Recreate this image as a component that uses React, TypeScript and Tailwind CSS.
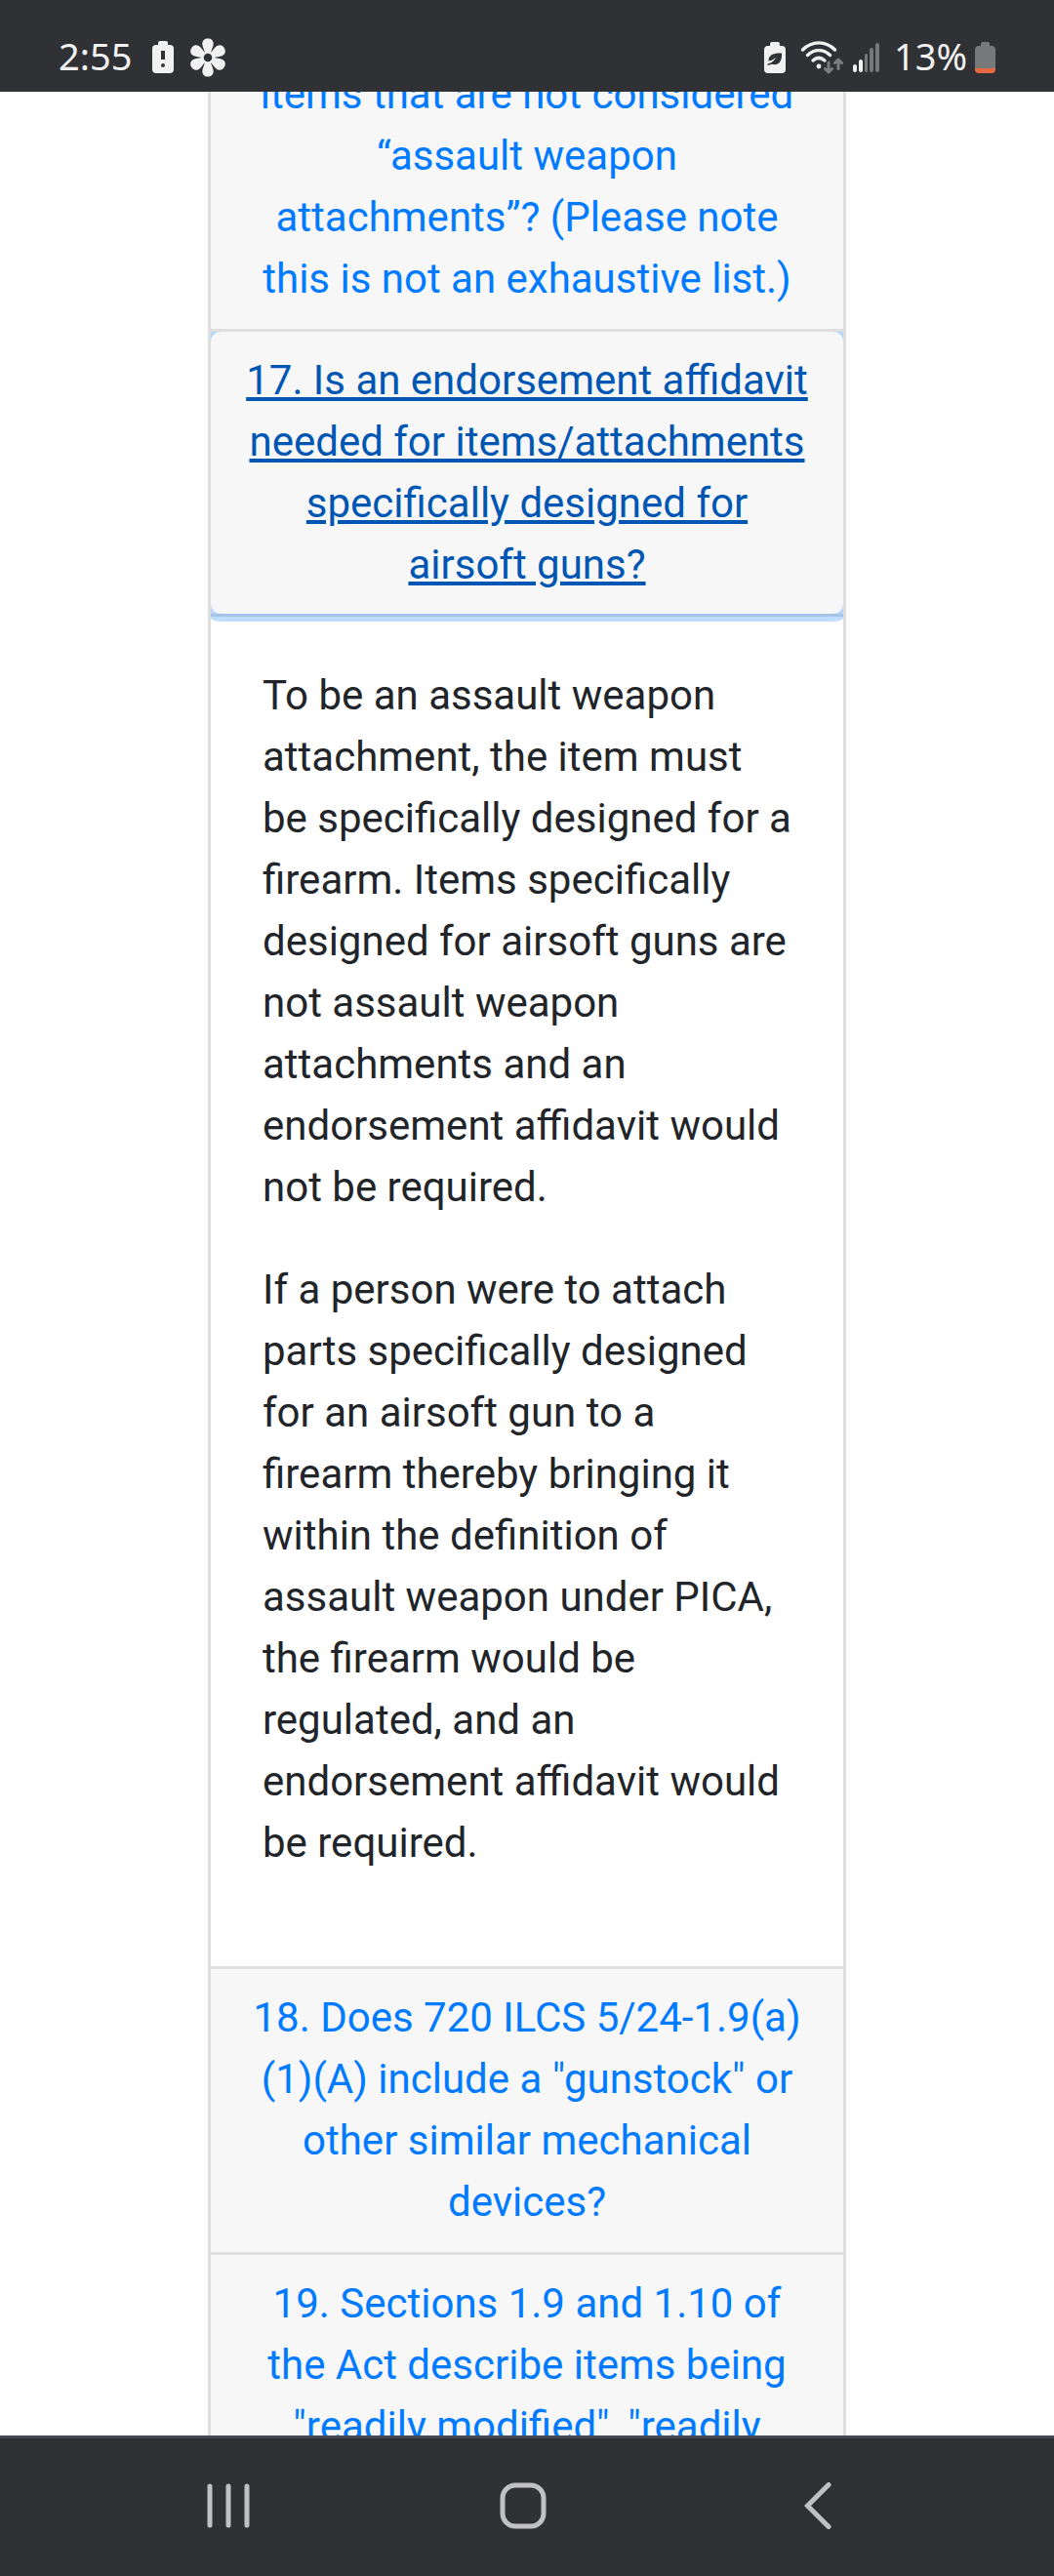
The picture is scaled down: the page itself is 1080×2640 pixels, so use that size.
import type { ReactNode } from "react";

const answer = [
  "To be an assault weapon attachment, the item must be specifically designed for a firearm. Items specifically designed for airsoft guns are not assault weapon attachments and an endorsement affidavit would not be required.",
  "If a person were to attach parts specifically designed for an airsoft gun to a firearm thereby bringing it within the definition of assault weapon under PICA, the firearm would be regulated, and an endorsement affidavit would be required.",
];

const petals = [0, 60, 120, 180, 240, 300];

function BatteryAlertIcon() {
  return (
    <svg width="24" height="34" viewBox="0 0 24 34" aria-hidden="true">
      <path
        d="M7 4V2q0-2 2-2h6q2 0 2 2v2h2q4 0 4 4v21q0 4-4 4H5q-4 0-4-4V8q0-4 4-4z"
        fill="#f1f1f1"
      />
      <path d="M12 10v9" stroke="#303135" strokeWidth="4" />
      <circle cx="12" cy="25" r="2" fill="#303135" />
    </svg>
  );
}

function FlowerIcon() {
  return (
    <svg width="40" height="40" viewBox="0 0 40 40" aria-hidden="true">
      <g fill="#f1f1f1">
        {petals.map((deg) => (
          <path
            key={deg}
            transform={`rotate(${deg} 20 20)`}
            d="M17.5 16.5C16.5 12 14.3 9 14.3 6C14.3 2.5 16.5 .5 20 .5S25.7 2.5 25.7 6C25.7 9 23.5 12 22.5 16.5z"
          />
        ))}
        <circle cx="20" cy="20" r="6" />
      </g>
      <circle cx="20" cy="20" r="4.3" fill="#303135" />
    </svg>
  );
}

function BatteryLeafIcon() {
  return (
    <svg width="22" height="32" viewBox="0 0 22 32" aria-hidden="true">
      <path
        d="M6 4V2q0-2 2-2h6q2 0 2 2v2h2q4 0 4 4v20q0 4-4 4H4q-4 0-4-4V8q0-4 4-4z"
        fill="#f1f1f1"
      />
      <path
        d="M18 11.5C10 11 4.5 13 4.5 19.5C8 19 10 17.5 12 16C10.5 19 8 21.3 3.5 22.5V24L8 22.8C15 24.5 18.5 20 18 11.5z"
        fill="#303135"
      />
    </svg>
  );
}

function WifiIcon() {
  return (
    <svg width="49" height="34" viewBox="-5 0 49 34" fill="none" aria-hidden="true">
      <g stroke="#f1f1f1" strokeWidth="3.4" strokeLinecap="round">
        <path d="M2.5 9C12 -.5 26 -.5 35.5 9" />
        <path d="M7.5 14.5C14.5 8 23.5 8 30.5 14.5" />
        <path d="M13 20C17 16.5 21 16.5 25 20" />
      </g>
      <circle cx="19" cy="26" r="2.4" fill="#f1f1f1" />
      <g stroke="#7c7d80" strokeWidth="3" strokeLinecap="round" strokeLinejoin="round">
        <path d="M29 22v9.5M25.5 28.500l3.500 3.500l3.500-3.500" />
        <path d="M39 28.500V19.500M35.500 22.500l3.500-3.500l3.500 3.500" />
      </g>
    </svg>
  );
}

function SignalIcon() {
  return (
    <svg width="28" height="30" viewBox="0 0 28 30" aria-hidden="true">
      <g fill="#f1f1f1">
        <rect x="0" y="22" width="4" height="8" rx="2" />
        <rect x="6" y="17" width="4" height="13" rx="2" />
      </g>
      <g fill="#77787a">
        <rect x="12" y="11" width="3" height="19" rx="1.5" />
        <rect x="17" y="5" width="4" height="25" rx="2" />
        <rect x="23" y="0" width="4" height="30" rx="2" />
      </g>
    </svg>
  );
}

function BatteryLowIcon() {
  return (
    <svg width="21" height="32" viewBox="0 0 21 32" aria-hidden="true">
      <path
        d="M6 4V2q0-2 2-2h5q2 0 2 2v2h2q4 0 4 4v19H0V8q0-4 4-4z"
        fill="#77787a"
      />
      <path d="M0 27h21v1q0 4-4 4H4q-4 0-4-4z" fill="#e8693f" />
    </svg>
  );
}

function StatusBar() {
  return (
    <header className="flex h-[94px] shrink-0 items-center justify-between bg-[#303135] px-[60px] pt-6 font-['Noto_Sans',sans-serif] text-[38px] leading-none text-[#f1f1f1]">
      <div className="flex items-center">
        <span className="pb-1">2:55</span>
        <div className="ml-5 flex items-center gap-[14px]">
          <BatteryAlertIcon />
          <FlowerIcon />
        </div>
      </div>
      <div className="flex items-center">
        <div className="mr-[14px] flex items-center gap-[10px]">
          <BatteryLeafIcon />
          <WifiIcon />
          <SignalIcon />
        </div>
        <span className="mr-2 pb-1">13%</span>
        <BatteryLowIcon />
      </div>
    </header>
  );
}

type FaqProps = {
  question: string;
  open?: boolean;
  children?: ReactNode;
};

function Faq({ question, open = false, children }: FaqProps) {
  return (
    <div className="overflow-hidden border-x-3 border-b-3 border-[#dfdfdf]">
      <h2 className={open ? "border-b-3 border-[#dfdfdf] bg-[#f7f7f7]" : "bg-[#f7f7f7]"}>
        <button
          type="button"
          aria-expanded={open}
          className={
            open
              ? "block w-full rounded-[10px] px-8 pt-[18px] pb-[19px] text-center text-[#0056b3] underline shadow-[0_0_0_8px_rgba(0,123,255,0.25)]"
              : "block w-full px-8 pt-[18px] pb-5 text-center text-[#007bff]"
          }
        >
          {question}
        </button>
      </h2>
      {children}
    </div>
  );
}

function NavBar() {
  return (
    <nav className="grid h-36 shrink-0 grid-cols-3 items-center justify-items-center border-t-3 border-[#45464f] bg-[#303135] pr-[91px] pb-[3px] pl-[83px] text-[#c1c1c3]">
      <button type="button" aria-label="Recent apps">
        <svg width="44" height="48" viewBox="0 0 44 48" fill="none" stroke="currentColor" strokeWidth="5" strokeLinecap="round">
          <path d="M3 4v40M22 4v40M41 4v40" />
        </svg>
      </button>
      <button type="button" aria-label="Home">
        <svg width="48" height="48" viewBox="0 0 48 48" fill="none" stroke="currentColor" strokeWidth="5">
          <rect x="3" y="3" width="42" height="42" rx="13" />
        </svg>
      </button>
      <button type="button" aria-label="Back">
        <svg width="28" height="48" viewBox="0 0 28 48" fill="none" stroke="currentColor" strokeWidth="5" strokeLinecap="round">
          <path d="M25 2.5L3.5 24L25 45.5" />
        </svg>
      </button>
    </nav>
  );
}

export default function App() {
  return (
    <div className="flex h-screen flex-col bg-white">
      <StatusBar />
      <main className="flex-1 overflow-hidden">
        {/* scrolled so that the first question is partly under the status bar */}
        <div className="mx-auto -mt-[47px] w-full max-w-[654px] font-[Roboto,sans-serif] text-[42px] leading-[63px] text-[#212529]">
          <Faq question="items that are not considered “assault weapon attachments”? (Please note this is not an exhaustive list.)" />
          <Faq
            question="17. Is an endorsement affidavit needed for items/attachments specifically designed for airsoft guns?"
            open
          >
            <div className="space-y-[42px] px-[53px] pt-[49px] pb-[95px]">
              {answer.map((text) => (
                <p key={text}>{text}</p>
              ))}
            </div>
          </Faq>
          <Faq question='18. Does 720 ILCS 5/24-1.9(a)(1)(A) include a "gunstock" or other similar mechanical devices?' />
          <Faq question='19. Sections 1.9 and 1.10 of the Act describe items being "readily modified", "readily' />
        </div>
      </main>
      <NavBar />
    </div>
  );
}
